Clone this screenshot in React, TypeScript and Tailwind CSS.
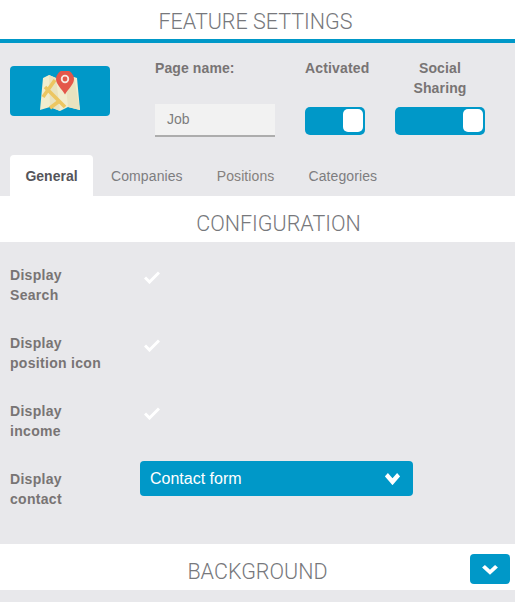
import React from 'react';

const labelClass = "font-['Liberation_Sans',sans-serif] text-sm font-bold leading-5 text-[#787474]";
const titleClass = "font-['Roboto',sans-serif] text-[21.5px] font-light leading-none text-[#77787c]";

const Chevron = ({ className, weight = 4 }: { className: string; weight?: number }) => (
  <svg viewBox="0 0 16 12" preserveAspectRatio="none" className={className} fill="none" stroke="#ffffff" strokeWidth={weight}>
    <path d="M1.5 2.5 8 9l6.5-6.5" />
  </svg>
);

const Check = () => (
  <svg viewBox="0 0 16 14" className="h-[14px] w-4" fill="none" stroke="#ffffff" strokeWidth="3">
    <path d="M1 7.5 5.5 12 15 2.5" />
  </svg>
);

const MapIcon = () => (
  <svg viewBox="0 0 40 40" className="h-10 w-10">
    <path d="M3 7 9 4l7 3 9-1 9 0 3 1 3 32-12-3-8 4-10-4-10 3z" fill="#f1edce" />
    <path d="M9 4l7 3 4 33-10-4z" fill="#e9e3bf" />
    <path d="M25 6h9l6 33-12-3z" fill="#e9e3bf" />
    <path d="M5 16 25 36M15 9 3 26M18 31l-8 6" stroke="#ecc661" strokeWidth="3.6" fill="none" />
    <path d="M25 23.5c-3-5.5-9-10-9-15.5a9 9 0 0 1 18 0c0 5.500-6 10-9 15.500z" fill="#e4574a" />
    <circle cx="25" cy="8" r="3.300" fill="none" stroke="#f5e9e0" strokeWidth="1.800" />
  </svg>
);

const Toggle = ({ width }: { width: string }) => (
  <div className={`flex h-7 items-center justify-end rounded-[5px] bg-[#0098c8] pb-[1px] pr-[2px] ${width}`}>
    <div className="h-[23px] w-5 rounded-[5px] bg-white" />
  </div>
);

const SectionTitle = ({ text, inset, children }: { text: string; inset: string; children?: React.ReactNode }) => (
  <div className={`relative flex h-[46px] items-center justify-center bg-white pt-[10px] ${inset}`}>
    <h2 className={titleClass}>{text}</h2>
    {children}
  </div>
);

const CheckRow = ({ first, second }: { first: string; second: string }) => (
  <div className="flex h-[68px] pl-[10px]">
    <p className={`${labelClass} w-[130px] tracking-[0.3px]`}>
      {first}
      <br />
      {second}
    </p>
    <div className="pl-[4px] pt-[5px]">
      <Check />
    </div>
  </div>
);

const App = () => {
  return (
    <div className="h-[602px] w-[516px] overflow-hidden bg-white">
      <div className="w-[515px] bg-[#e8e8eb]">
        <div className="flex h-[39px] items-center justify-center bg-white pr-[4px] pt-1">
          <h1 className={titleClass}>FEATURE SETTINGS</h1>
        </div>
        <div className="h-1 bg-[#0098c8]" />

        <div className="flex px-[10px] pt-[15px]">
          <div className="mt-2 flex h-[50px] w-[100px] items-center justify-center rounded-[4px] bg-[#0098c8]">
            <MapIcon />
          </div>
          <div className="ml-[45px] w-[120px]">
            <p className={`${labelClass} tracking-[0.1px]`}>Page name:</p>
            <div className="mt-[26px] flex h-[33px] items-center border-b-2 border-[#adadad] bg-[#f2f2f2] pb-[1px] pl-3 font-['Liberation_Sans',sans-serif] text-sm text-[#7d7d7d]">
              Job
            </div>
          </div>
          <div className="ml-[30px] w-[60px]">
            <p className={`${labelClass} whitespace-nowrap tracking-[0.15px]`}>Activated</p>
            <div className="mt-[29px]">
              <Toggle width="w-[60px]" />
            </div>
          </div>
          <div className="ml-[30px] w-[90px]">
            <p className={`${labelClass} text-center tracking-[0.15px]`}>
              Social
              <br />
              Sharing
            </p>
            <div className="mt-[9px]">
              <Toggle width="w-[90px]" />
            </div>
          </div>
        </div>

        <div className="mt-[18px] flex h-[41px] pl-[10px] font-['Liberation_Sans',sans-serif] text-sm tracking-[0.1px]">
          <div className="flex w-[83px] items-center justify-center rounded-t-[4px] bg-white font-bold tracking-normal text-[#55555a]">General</div>
          <div className="ml-[18px] flex items-center text-[#7d7d80]">Companies</div>
          <div className="ml-[34px] flex items-center text-[#85807d]">Positions</div>
          <div className="ml-[34px] flex items-center text-[#7d7d80]">Categories</div>
        </div>

        <SectionTitle text="CONFIGURATION" inset="pl-[42px]" />

        <div className="h-[302px] pt-[23px]">
          <CheckRow first="Display" second="Search" />
          <CheckRow first="Display" second="position icon" />
          <CheckRow first="Display" second="income" />
          <div className="flex pl-[10px]">
            <p className={`${labelClass} w-[130px] tracking-[0.3px]`}>
              Display
              <br />
              contact
            </p>
            <div className="mt-[-8px] flex h-[35px] w-[273px] items-center justify-between rounded-[4px] bg-[#0098c8] pl-[10px] pr-[13px] font-['Liberation_Sans',sans-serif] text-base text-white">
              Contact form
              <Chevron className="h-[13px] w-[15px]" weight={4.5} />
            </div>
          </div>
        </div>

        <SectionTitle text="BACKGROUND" inset="">
          <div className="absolute right-[5px] top-[10px] flex h-[30px] w-10 items-center justify-center rounded-[4px] bg-[#0098c8]">
            <Chevron className="h-[11px] w-4" />
          </div>
        </SectionTitle>

        <div className="h-3" />
      </div>
    </div>
  );
};

export default App;
